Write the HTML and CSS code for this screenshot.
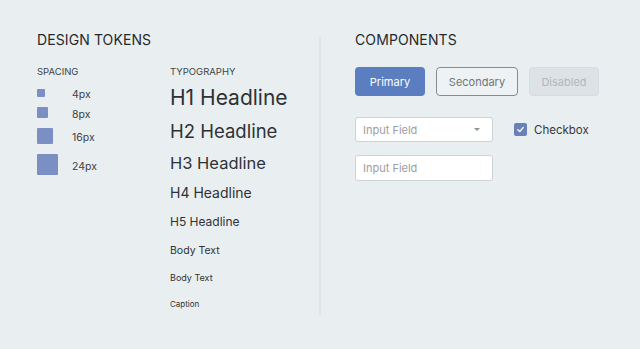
FILE: index.html
```html
<!DOCTYPE html>
<html lang="en">
<head>
  <meta charset="UTF-8">
  <title>Design System</title>
  <link rel="stylesheet" href="styles.css">
</head>
<body>

  <div class="board">

    <!-- Design tokens -->
    <section class="panel tokens">
      <h2 class="panel-title">DESIGN TOKENS</h2>

      <div class="token-cols">
        <div class="spacing-col">
          <div class="col-label">SPACING</div>
          <div class="spacing-list">
            <div class="spacing-row"><span class="swatch-cell"><span class="swatch s4"></span></span><span class="spacing-name">4px</span></div>
            <div class="spacing-row"><span class="swatch-cell"><span class="swatch s8"></span></span><span class="spacing-name">8px</span></div>
            <div class="spacing-row"><span class="swatch-cell"><span class="swatch s16"></span></span><span class="spacing-name">16px</span></div>
            <div class="spacing-row"><span class="swatch-cell"><span class="swatch s24"></span></span><span class="spacing-name">24px</span></div>
          </div>
        </div>

        <div class="type-col">
          <div class="col-label">TYPOGRAPHY</div>
          <div class="type-list">
            <div class="t-h1">H1 Headline</div>
            <div class="t-h2">H2 Headline</div>
            <div class="t-h3">H3 Headline</div>
            <div class="t-h4">H4 Headline</div>
            <div class="t-h5">H5 Headline</div>
            <div class="t-body">Body Text</div>
            <div class="t-body-sm">Body Text</div>
            <div class="t-caption">Caption</div>
          </div>
        </div>
      </div>
    </section>

    <div class="divider"></div>

    <!-- Components -->
    <section class="panel components">
      <h2 class="panel-title">COMPONENTS</h2>

      <div class="btn-row">
        <button class="btn btn-primary">Primary</button>
        <button class="btn btn-secondary">Secondary</button>
        <button class="btn btn-disabled" disabled>Disabled</button>
      </div>

      <div class="field-row">
        <div class="field select">
          <span class="placeholder">Input Field</span>
          <span class="caret"></span>
        </div>
        <label class="checkbox">
          <span class="check-box">
            <svg width="9" height="9" viewBox="0 0 10 10"><path d="M2 5.2 L4.2 7.3 L8 2.8" fill="none" stroke="#fff" stroke-width="1.4" stroke-linecap="round" stroke-linejoin="round"/></svg>
          </span>
          Checkbox
        </label>
      </div>

      <div class="field input">
        <span class="placeholder">Input Field</span>
      </div>
    </section>

  </div>

</body>
</html>
```

FILE: styles.css
```css
body {
  margin: 0;
  font-family: Inter, 'Noto Sans', sans-serif;
  background-color: #e9eff1;
  color: #2b2f33;
}

.board {
  display: flex;
  padding: 31px 0 0 37px;
  height: 349px;
  box-sizing: border-box;
}

.panel-title {
  margin: 0;
  font-size: 14px;
  font-weight: 400;
  line-height: 18px;
  letter-spacing: 0.1px;
  color: #26292d;
}

/* left panel */
.tokens {
  width: 282px;
}

.token-cols {
  display: flex;
  margin-top: 17px;
}

.col-label {
  font-size: 9.5px;
  line-height: 12px;
  color: #40444a;
}

.spacing-col {
  width: 133px;
}

.spacing-list {
  display: flex;
  flex-direction: column;
  gap: 10px;
  margin-top: 11px;
}

.spacing-row {
  display: flex;
  align-items: center;
}

.swatch-cell {
  width: 35px;
  flex: none;
  display: flex;
}

.swatch {
  display: block;
  background: #7b8fc5;
  border-radius: 1px;
}

.s4 { width: 8px; height: 8px; }
.s8 { width: 11px; height: 11px; }
.s16 { width: 16px; height: 16px; }
.s24 { width: 21px; height: 21px; }

.spacing-name {
  font-size: 10.5px;
  line-height: 8px;
  color: #3c4045;
  position: relative;
  top: 2px;
}

.type-list {
  display: flex;
  flex-direction: column;
  gap: 8px;
  margin-top: 7px;
  color: #2e3236;
}

.t-h1 { font-size: 21px; line-height: 26px; }
.t-h2 { font-size: 18.5px; line-height: 24px; }
.t-h3 { font-size: 16.5px; line-height: 24px; }
.t-h4 { font-size: 14px; line-height: 20px; }
.t-h5 { font-size: 12px; line-height: 22px; }
.t-body { font-size: 10.5px; line-height: 20px; }
.t-body-sm { font-size: 9px; line-height: 18px; }
.t-caption { font-size: 8px; line-height: 18px; }

.divider {
  width: 2px;
  margin-top: 5px;
  height: 280px;
  background: #dfe6e9;
}

/* right panel */
.components {
  padding-left: 34px;
}

.btn-row {
  display: flex;
  gap: 11px;
  margin-top: 18px;
}

.btn {
  height: 29px;
  width: 70px;
  padding: 0;
  border-radius: 4px;
  font-family: inherit;
  font-size: 11px;
  border: none;
  box-sizing: border-box;
}

.btn-primary {
  background: #5a7ebf;
  color: #fff;
}

.btn-secondary {
  width: 82px;
  background: #eef2f4;
  border: 1.5px solid #868b91;
  color: #6f7478;
}

.btn-disabled {
  background: #dde2e6;
  border: 1px solid #d6dbdf;
  color: #b2b7bc;
}

.field-row {
  display: flex;
  align-items: center;
  margin-top: 21px;
}

.field {
  width: 138px;
  height: 25px;
  box-sizing: border-box;
  background: #fff;
  border: 1px solid #ccd2d6;
  border-radius: 3px;
  display: flex;
  align-items: center;
  padding: 0 7px;
}

.placeholder {
  font-size: 11px;
  color: #9a9ea3;
  flex: 1;
}

.caret {
  width: 0;
  height: 0;
  border-left: 3.5px solid transparent;
  border-right: 3.5px solid transparent;
  border-top: 3.5px solid #8f9398;
  margin-right: 5px;
}

.input {
  height: 26px;
  margin-top: 13px;
}

.checkbox {
  display: flex;
  align-items: center;
  gap: 7px;
  margin-left: 21px;
  font-size: 11.5px;
  color: #33373b;
}

.check-box {
  width: 13px;
  height: 13px;
  border-radius: 2px;
  background: #6a80b8;
  display: flex;
  align-items: center;
  justify-content: center;
}
```
